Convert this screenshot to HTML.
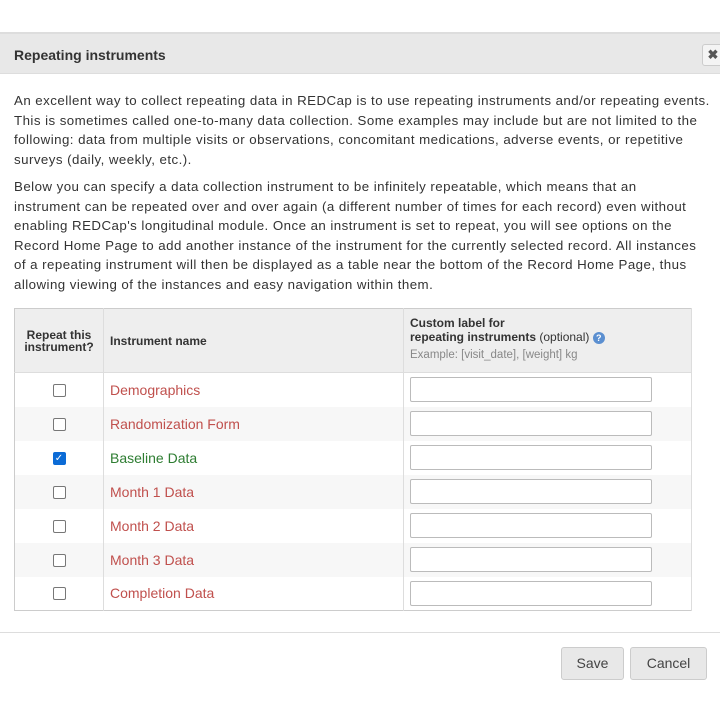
<!DOCTYPE html>
<html><head><meta charset="utf-8"><style>
*{box-sizing:border-box;margin:0;padding:0}
body{width:720px;height:720px;background:#fff;font-family:"Liberation Sans",sans-serif;color:#333;position:relative;overflow:hidden}
.topline{position:absolute;left:0;right:0;top:32px;height:2px;background:#ddd}
.hdr{position:absolute;left:0;right:0;top:34px;height:40px;background:#e8e8e8;border-bottom:1px solid #ddd}
.hdr h1{position:absolute;left:14px;top:13px;font-size:14px;font-weight:bold;color:#333}
.close{position:absolute;left:702px;top:44px;width:22px;height:22px;background:#f4f4f4;border:1px solid #ccc;border-radius:3px;font-size:13px;font-weight:bold;color:#555;text-align:center;line-height:20px}
p{position:absolute;left:14px;width:720px;font-size:13.3px;letter-spacing:0.45px;line-height:19.5px;color:#333;white-space:nowrap}
table{position:absolute;left:14px;top:308px;width:678px;border-collapse:collapse;border:1px solid #ccc;font-size:12.5px}
th{background:#eee;height:64px;text-align:left;font-size:12px;border-right:1px solid #ddd;border-bottom:1px solid #ddd;vertical-align:middle}
td{height:34px;border-right:1px solid #ddd;vertical-align:middle}
tr:nth-child(odd) td{background:#f7f7f7}
tr:nth-child(even) td{background:#fff}
.c1{width:89px;text-align:center}
.c2{width:300px;padding-left:6px}
.c3{padding-left:6px}
.cb{display:inline-block;width:13px;height:13px;border:1px solid #777;border-radius:2px;background:#fff;vertical-align:middle}
.cb.on{background:#0b6bd6;border-color:#0b6bd6;color:#fff;font-size:10px;line-height:11px;text-align:center}
.name{color:#c0504d;font-size:14px}
.green{color:#2e7d32}
.inp{width:242px;height:25px;border:1px solid #bbb;border-radius:2px;background:#fff}
.div{position:absolute;left:0;right:0;top:632px;height:1px;background:#ddd}
.btn{position:absolute;top:647px;height:33px;background:#e8e8e8;border:1px solid #ccc;border-radius:3px;font-size:14px;color:#444;text-align:center;line-height:31px}
</style></head><body>
<div class="topline"></div>
<div class="hdr"><h1>Repeating instruments</h1></div>
<div class="close">✖</div>
<p style="top:91px">An excellent way to collect repeating data in REDCap is to use repeating instruments and/or repeating events.<br>This is sometimes called one-to-many data collection. Some examples may include but are not limited to the<br>following: data from multiple visits or observations, concomitant medications, adverse events, or repetitive<br>surveys (daily, weekly, etc.).</p>
<p style="top:177px">Below you can specify a data collection instrument to be infinitely repeatable, which means that an<br>instrument can be repeated over and over again (a different number of times for each record) even without<br>enabling REDCap's longitudinal module. Once an instrument is set to repeat, you will see options on the<br>Record Home Page to add another instance of the instrument for the currently selected record. All instances<br>of a repeating instrument will then be displayed as a table near the bottom of the Record Home Page, thus<br>allowing viewing of the instances and easy navigation within them.</p>
<table>
<tr><th class="c1" style="text-align:center;line-height:12px">Repeat this<br>instrument?</th><th class="c2">Instrument name</th><th class="c3" style="line-height:14px">Custom label for<br>repeating instruments <span style="font-weight:normal">(optional)</span> <span style="display:inline-block;width:12px;height:12px;border-radius:50%;background:#5b8fd0;color:#fff;font-size:9px;text-align:center;line-height:12px">?</span><br><span style="font-weight:normal;color:#888;font-size:11.5px;line-height:22px">Example: [visit_date], [weight] kg</span></th></tr>
<tr><td class="c1"><span class="cb"></span></td><td class="c2 name">Demographics</td><td class="c3"><div class="inp"></div></td></tr>
<tr><td class="c1"><span class="cb"></span></td><td class="c2 name">Randomization Form</td><td class="c3"><div class="inp"></div></td></tr>
<tr><td class="c1"><span class="cb on">✓</span></td><td class="c2 name green">Baseline Data</td><td class="c3"><div class="inp"></div></td></tr>
<tr><td class="c1"><span class="cb"></span></td><td class="c2 name">Month 1 Data</td><td class="c3"><div class="inp"></div></td></tr>
<tr><td class="c1"><span class="cb"></span></td><td class="c2 name">Month 2 Data</td><td class="c3"><div class="inp"></div></td></tr>
<tr><td class="c1"><span class="cb"></span></td><td class="c2 name">Month 3 Data</td><td class="c3"><div class="inp"></div></td></tr>
<tr><td class="c1"><span class="cb"></span></td><td class="c2 name">Completion Data</td><td class="c3"><div class="inp"></div></td></tr>
</table>
<div class="div"></div>
<div class="btn" style="left:561px;width:63px">Save</div>
<div class="btn" style="left:630px;width:77px">Cancel</div>
</body></html>
